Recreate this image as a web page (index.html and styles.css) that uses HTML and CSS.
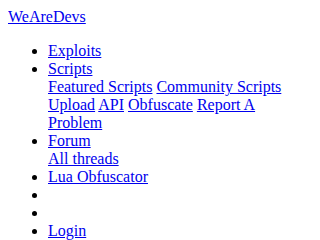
FILE: index.html
```html
<!DOCTYPE html>
<html>
<head>
<meta charset="utf-8">
<title>WeAreDevs</title>
<link rel="stylesheet" href="styles.css">
</head>
<body class="page">
<div class="brand"><a href="#">WeAreDevs</a></div>
<ul class="nav">
  <li><a href="#">Exploits</a></li>
  <li><a href="#">Scripts</a>
    <div class="sub"><a href="#">Featured Scripts</a> <a href="#">Community Scripts</a> <a href="#">Upload</a> <a href="#">API</a> <a href="#">Obfuscate</a> <a href="#">Report A Problem</a></div>
  </li>
  <li><a href="#">Forum</a>
    <div class="sub"><a href="#">All threads</a></div>
  </li>
  <li><a href="#">Lua Obfuscator</a></li>
  <li></li>
  <li></li>
  <li><a href="#">Login</a></li>
</ul>
</body>
</html>
```
FILE: styles.css
```css
.page {
  margin: 8px;
  font-family: "Liberation Serif", "Times New Roman", serif;
  font-size: 16px;
  color: #000;
  background: #fff;
}
.page a {
  color: #0000ee;
  text-decoration: underline;
}
.nav {
  margin: 16px 0;
  padding-left: 40px;
  list-style: disc;
}
```
